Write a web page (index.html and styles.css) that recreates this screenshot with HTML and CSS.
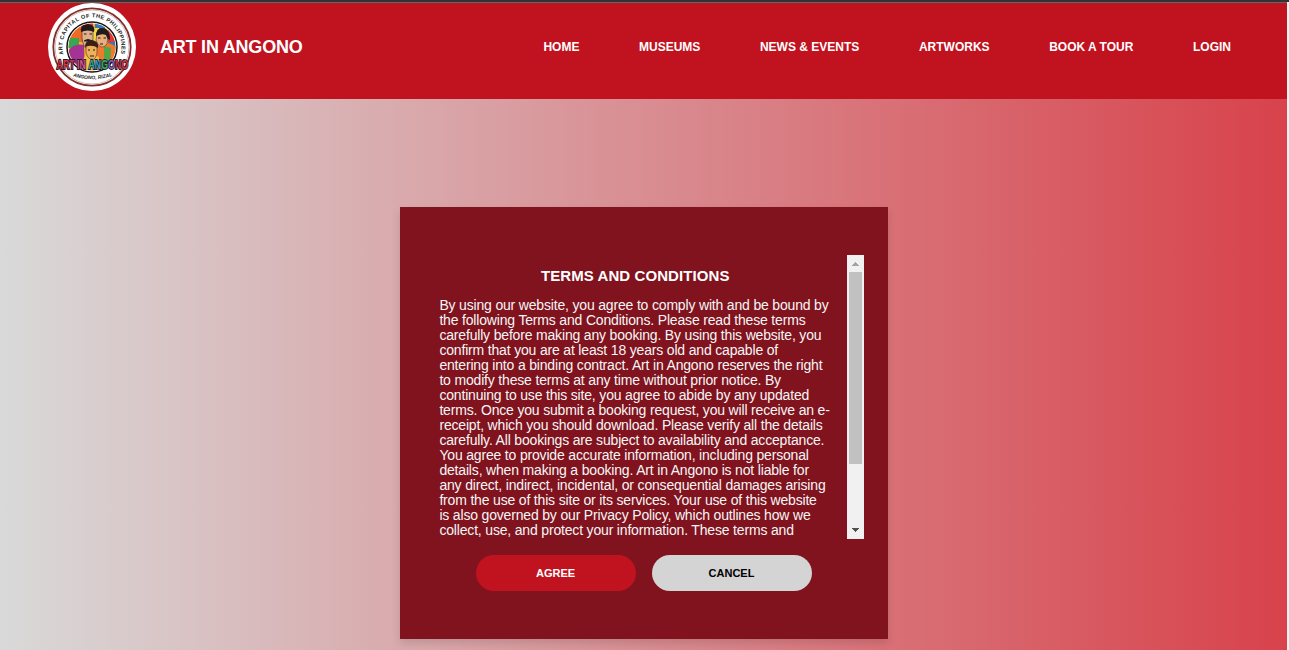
FILE: index.html
```
<!DOCTYPE html>
<html lang="en">
<head>
<meta charset="utf-8">
<title>Art in Angono</title>
<link rel="stylesheet" href="styles.css">
</head>
<body>
<div class="page">
  <header class="header">
    <a class="brand">
      <svg class="logo" viewBox="0 0 88 88" aria-label="Art in Angono">
        <defs>
          <path id="ring" d="M15.5 51.5 A29.5 29.5 0 1 1 72.5 51.5"/>
          <path id="lower" d="M24 73 Q44 79.5 64 73"/>
          <clipPath id="disc"><circle cx="44" cy="44" r="23.5"/></clipPath>
        </defs>
        <circle cx="44" cy="44" r="44" fill="#fff"/>
        <circle cx="44" cy="44" r="38.7" fill="none" stroke="#852c2c" stroke-width="1.8"/>
        <circle cx="44" cy="44" r="37" fill="none" stroke="#c9a9a6" stroke-width=".8"/>
        <circle cx="44" cy="44" r="25" fill="#fff" stroke="#171416" stroke-width="1.5"/>
        <g clip-path="url(#disc)">
          <path fill="#f2b52a" d="M20 20h48v50H20z"/>
          <path fill="#ef6a25" d="M20 24h17v15H20z"/>
          <path fill="#38a652" d="M20 35h11v10H20z"/>
          <path fill="#dc3839" d="M33 18h12v9H33zM60 26h10v14H60z"/>
          <path fill="#3675b8" d="M47 19h10v8H47zM61 39h9v11H61z"/>
          <path fill="#f4d84a" d="M45 25h6v15h-6z"/>
          <path fill="#a53394" d="M20 48q6-8 16-6l1 27H20z"/>
          <path fill="#ef7a2d" d="M48 44q11-8 20 0v24H49z"/>
          <path fill="#54a548" d="M56 43l7 2-1 18h-6z"/>
          <path fill="#deb08b" stroke="#54372d" stroke-width=".7" d="M34 26q6-4 11 1v9q-1 9-5 11-5-3-6-12z"/>
          <path fill="#211a1d" d="M33 29q-1-8 7-8 8 1 6 8-6-3-13 0zM36 37.5q4-3 8 0v1h-8z"/>
          <path fill="#e8ae7d" stroke="#67422e" stroke-width=".7" d="M49 31q5-4 11 2l-1 8q-3 4-6 3-4-2-5-7z"/>
          <path fill="#211a1d" d="M48 33q0-8 6-8 8 0 8 12-3-1-4-5-4-2-10 1z"/>
          <path fill="#f2c341" d="M36 54q7-5 15 0l1 12H35z"/>
          <path fill="#edb15b" stroke="#67422e" stroke-width=".7" d="M38 42q6-4 11 0v8q-1 6-5 7-5-2-6-7z"/>
          <path fill="#392016" d="M37 44q0-7 7-7 7 1 6 8-6-4-13-1z"/>
          <path d="M36 31h2.5m3 0H44M50 35h2.5m3 0H58M40 47h2m3 0h2M42 53h4M52 41h3" stroke="#251713"/>
        </g>
        <text class="logo-ring"><textPath href="#ring" startOffset="0" textLength="107" lengthAdjust="spacing">ART CAPITAL OF THE PHILIPPINES</textPath></text>
        <text class="logo-name" transform="translate(8.5 66.3) scale(.68 1)"><tspan fill="#df3543">AR</tspan><tspan fill="#c52b64">T </tspan><tspan fill="#e05095">I</tspan><tspan fill="#e0559a">N </tspan><tspan fill="#27b2a6">A</tspan><tspan fill="#2fa1db">N</tspan><tspan fill="#36b56b">G</tspan><tspan fill="#8760c8">O</tspan><tspan fill="#cd304a">N</tspan><tspan fill="#df3340">O</tspan></text>
        <text class="logo-place"><textPath href="#lower" startOffset="1">ANGONO, RIZAL</textPath></text>
      </svg>
      <span class="brand-name">ART IN ANGONO</span>
    </a>
    <nav class="nav">
      <a>HOME</a><a>MUSEUMS</a><a>NEWS &amp; EVENTS</a><a>ARTWORKS</a><a>BOOK A TOUR</a><a>LOGIN</a>
    </nav>
  </header>
  <main class="main">
    <section class="card">
      <div class="scroller">
        <div class="terms">
          <h1>TERMS AND CONDITIONS</h1>
          <p>By using our website, you agree to comply with and be bound by<br>
the following Terms and Conditions. Please read these terms<br>
carefully before making any booking. By using this website, you<br>
confirm that you are at least 18 years old and capable of<br>
entering into a binding contract. Art in Angono reserves the right<br>
to modify these terms at any time without prior notice. By<br>
continuing to use this site, you agree to abide by any updated<br>
terms. Once you submit a booking request, you will receive an e-<br>
receipt, which you should download. Please verify all the details<br>
carefully. All bookings are subject to availability and acceptance.<br>
You agree to provide accurate information, including personal<br>
details, when making a booking. Art in Angono is not liable for<br>
any direct, indirect, incidental, or consequential damages arising<br>
from the use of this site or its services. Your use of this website<br>
is also governed by our Privacy Policy, which outlines how we<br>
collect, use, and protect your information. These terms and</p>
        </div>
        <div class="scrollbar">
          <svg class="arrow" viewBox="0 0 17 17" shape-rendering="crispEdges"><path fill="#a3a3a3" d="M8 7h1v1h1v1h1v1h1v1H5v-1h1V9h1V8h1z"/></svg>
          <div class="thumb"></div>
          <svg class="arrow" viewBox="0 0 17 17" shape-rendering="crispEdges"><path fill="#505050" d="M5 6h7v1h-1v1h-1v1H9v1H8V9H7V8H6V7H5z"/></svg>
        </div>
      </div>
      <div class="actions">
        <button class="button agree">AGREE</button>
        <button class="button cancel">CANCEL</button>
      </div>
    </section>
  </main>
</div>
</body>
</html>
```
FILE: styles.css
```
* { box-sizing: border-box; }
body {
  margin: 0;
  background: #f1f1f1;
  font-family: "Liberation Sans", Arial, sans-serif;
  overflow: hidden;
}
.page {
  height: 650px;
  border-top: 2px solid #333;
  padding-right: 2px;
  display: flex;
  flex-direction: column;
}
.header {
  height: 97px;
  flex: none;
  border-top: 1px solid #666;
  background: #c1121f;
  display: flex;
  justify-content: space-between;
  align-items: flex-start;
  padding: 0 56px 0 48px;
  color: #fff;
}
.brand { display: flex; align-items: center; gap: 24px; height: 88px; }
.logo { width: 88px; height: 88px; display: block; }
.logo-ring { font-size: 5.6px; font-weight: 700; fill: #222; }
.logo-name {
  font-size: 13px;
  font-weight: 700;
  stroke: #241b25;
  stroke-width: 2px;
  paint-order: stroke;
}
.logo-place { font-size: 5px; font-weight: 700; font-style: italic; fill: #222; }
.brand-name { font-size: 18px; letter-spacing: -.22px; font-weight: 700; white-space: nowrap; }
.nav {
  display: flex;
  gap: 59.6px;
  height: 88px;
  align-items: center;
  font-size: 12px;
  font-weight: 700;
  white-space: nowrap;
}
.main {
  flex: 1;
  min-height: 0;
  padding-top: 108px;
  background: linear-gradient(to right, #d9d9d9, #d8424b);
  display: flex;
  justify-content: center;
  align-items: flex-start;
}
.card {
  width: 488px;
  height: 432px;
  margin-left: 1px;
  padding: 48px 24px;
  background: #80131e;
  box-shadow: 0 4px 8px rgba(0, 0, 0, .12);
  display: flex;
  flex-direction: column;
  gap: 16px;
}
.scroller { height: 284px; display: flex; }
.terms { flex: 1; padding: 12px 16px 0 15.4px; overflow: hidden; color: #f6f6f6; }
.terms h1 {
  margin: 0 0 13px;
  font-size: 15px;
  letter-spacing: .08px;
  line-height: 18px;
  text-align: center;
  color: #fff;
}
.terms p {
  margin: 0;
  font-size: 14px;
  letter-spacing: -.175px;
  line-height: 15px;
  white-space: nowrap;
}
.scrollbar {
  width: 17px;
  background: #f1f1f1;
  display: flex;
  flex-direction: column;
}
.arrow { width: 17px; height: 17px; display: block; }
.thumb { height: 192px; margin: 0 2px 58px; background: #c1c1c1; }
.actions { display: flex; justify-content: center; gap: 16px; }
.button {
  width: 160px;
  height: 36px;
  border: 0;
  border-radius: 18px;
  padding: 0 1px 0 0;
  font: 700 11px "Liberation Sans", Arial, sans-serif;
}
.agree { background: #c1121f; color: #fff; }
.cancel { background: #d4d4d4; color: #000; }
```
